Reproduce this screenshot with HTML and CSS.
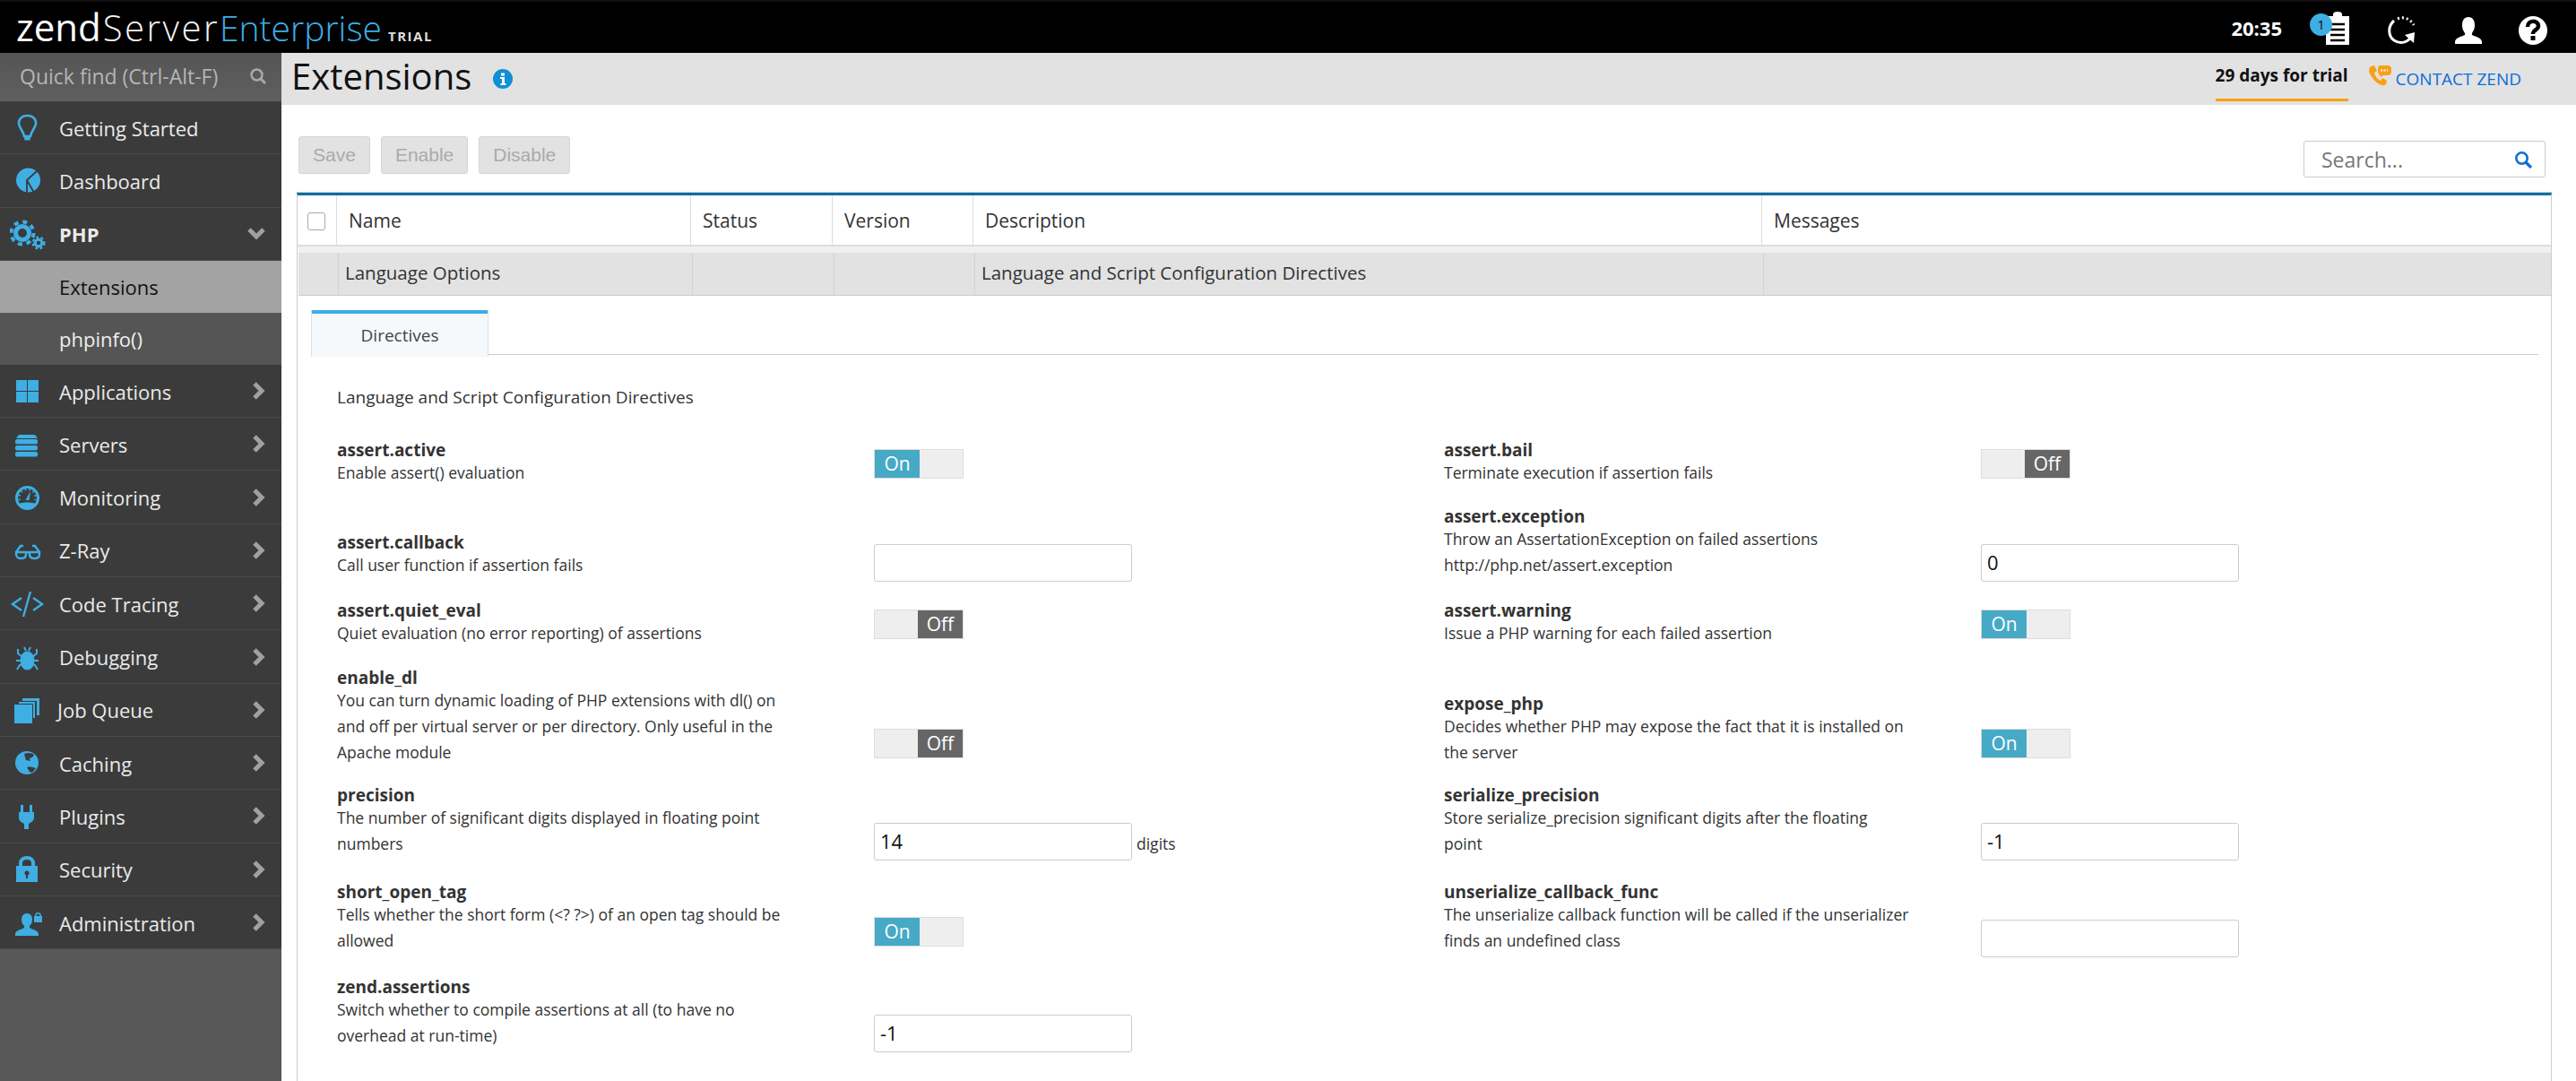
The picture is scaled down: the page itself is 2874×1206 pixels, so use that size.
FILE: index.html
```html
<!DOCTYPE html>
<html lang="en">
<head>
<meta charset="utf-8">
<title>Extensions</title>
<link rel="stylesheet" href="styles.css">
</head>
<body>
<header class="topbar">
  <div class="logo"><span class="logo-zend">zend</span><span class="logo-server">Server</span><span class="logo-ent">Enterprise</span><span class="logo-trial">TRIAL</span></div>
  <div class="top-right">
    <span class="clock">20:35</span>
    <span class="top-icon clip">
      <svg width="28" height="37" viewBox="0 0 28 37"><path fill="#fff" d="M1 5h8V3a5 3 0 0 1 10 0v2h8v32H1z"/><path stroke="#000" stroke-width="2.5" d="M6 14h16M6 20h16M6 26h16M6 32h16"/></svg>
      <span class="badge">1</span>
    </span>
    <svg class="top-icon refresh" width="32" height="32" viewBox="0 0 32 32" fill="none" stroke="#fff"><path stroke-width="3" d="M7 5C0 11 0 22 7 27c6 4 13 3 18-2"/><path fill="#fff" stroke="none" d="M19 21l11-3-1 12z"/><path stroke-width="3" stroke-dasharray="2 3" d="M11 3c7-3 14 0 18 7"/></svg>
    <svg class="top-icon user" width="30" height="30" viewBox="0 0 30 30"><path fill="#fff" d="M15 0c5 0 7 4 7 9s-2 7-3 9v2c4 2 11 3 11 8v2H0v-2c0-5 7-6 11-8v-2c-1-2-3-4-3-9s2-9 7-9z"/></svg>
    <svg class="top-icon help" width="32" height="32" viewBox="0 0 32 32"><circle cx="16" cy="16" r="16" fill="#fff"/><path fill="none" stroke="#000" stroke-width="4.5" d="M10 12c0-8 12-8 12-1 0 4-6 5-6 8v1"/><rect x="13.5" y="22" width="5" height="5" fill="#000"/></svg>
  </div>
</header>
<div class="layout">
  <nav class="sidebar">
    <div class="quickfind"><span>Quick find (Ctrl-Alt-F)</span>
      <svg width="20" height="20" viewBox="0 0 20 20" fill="none" stroke="#a9a9a9" stroke-width="2.5"><circle cx="8.5" cy="8.5" r="6"/><path stroke-width="3" d="M13 13l5 5"/></svg>
    </div>
    <a class="nav-item"><span class="nav-ic"><svg width="40" height="40" viewBox="0 0 40 40" fill="none" stroke="#3eaee3"><path stroke-width="2.6" d="M19.5 7C13 7 9.5 11.500 10 16c.5 5 5 8 6 14h7c1-6 5.500-9 6-14 .5-4.500-3-9-9.500-9z"/><path fill="#3eaee3" stroke="none" d="M15.500 29h8l-1 5.500h-6z"/></svg></span><span class="nav-label">Getting Started</span></a>
    <a class="nav-item"><span class="nav-ic"><svg width="40" height="40" viewBox="0 0 40 40"><circle cx="20.500" cy="20" r="13.500" fill="#3eaee3"/><path fill="none" stroke="#3b3b3b" stroke-width="1.800" d="M31 9L19 20l8 14M19 20v14"/></svg></span><span class="nav-label">Dashboard</span></a>
    <a class="nav-item open"><span class="nav-ic"><svg width="40" height="40" viewBox="0 0 40 40" fill="none" stroke="#3eaee3"><circle cx="14" cy="19" r="7.500" stroke-width="5"/><circle cx="14" cy="19" r="12.500" stroke-width="4" stroke-dasharray="5 4.800"/><circle cx="32" cy="30" r="3.800" stroke-width="3"/><circle cx="32" cy="30" r="6.300" stroke-width="2.400" stroke-dasharray="2.800 2.450"/></svg></span><span class="nav-label">PHP</span>
      <svg class="chev" width="20" height="14" viewBox="0 0 20 14" fill="none" stroke="#a0a0a0" stroke-width="5"><path d="M2 2l8 8 8-8"/></svg></a>
    <a class="sub-item active">Extensions</a>
    <a class="sub-item">phpinfo()</a>
    <a class="nav-item"><span class="nav-ic"><svg width="40" height="40" viewBox="0 0 40 40" fill="#3eaee3"><rect x="7" y="8" width="12" height="12"/><rect x="20" y="8" width="12" height="12"/><rect x="7" y="21" width="12" height="12"/><rect x="20" y="21" width="12" height="12"/></svg></span><span class="nav-label">Applications</span><svg class="chev" width="14" height="20" viewBox="0 0 14 20" fill="none" stroke="#a0a0a0" stroke-width="5"><path d="M2 2l8 8-8 8"/></svg></a>
    <a class="nav-item"><span class="nav-ic"><svg width="40" height="40" viewBox="0 0 40 40" fill="#3eaee3"><path d="M10 10h18l3 4H7z"/><rect x="6" y="15" width="25" height="5.500" rx="2"/><rect x="6" y="22" width="25" height="5.500" rx="2"/><rect x="6" y="29" width="25" height="5.500" rx="2"/></svg></span><span class="nav-label">Servers</span><svg class="chev" width="14" height="20" viewBox="0 0 14 20" fill="none" stroke="#a0a0a0" stroke-width="5"><path d="M2 2l8 8-8 8"/></svg></a>
    <a class="nav-item"><span class="nav-ic"><svg width="40" height="40" viewBox="0 0 40 40" fill="none" stroke="#3eaee3"><circle cx="19.500" cy="20.500" r="12" stroke-width="3"/><path stroke-width="2" stroke-dasharray="1.500 3.200" d="M11 23a9 9 0 1 1 17 0"/><path fill="#3eaee3" stroke="none" d="M23 13l-1.500 10h-4zM10 27c6-2 13-2 19 0l-4 4H14z"/></svg></span><span class="nav-label">Monitoring</span><svg class="chev" width="14" height="20" viewBox="0 0 14 20" fill="none" stroke="#a0a0a0" stroke-width="5"><path d="M2 2l8 8-8 8"/></svg></a>
    <a class="nav-item"><span class="nav-ic"><svg width="40" height="40" viewBox="0 0 40 40" fill="none" stroke="#3eaee3" stroke-width="2.400"><path d="M7 22h11v2c0 3-2 5-5 5h-1c-3 0-5-2-5-5zM22 22h11v2c0 3-2 5-5 5h-1c-3 0-5-2-5-5zM18 23c1-1 3-1 4 0M7 22l5-7h3M33 22l-5-7h-3"/></svg></span><span class="nav-label">Z-Ray</span><svg class="chev" width="14" height="20" viewBox="0 0 14 20" fill="none" stroke="#a0a0a0" stroke-width="5"><path d="M2 2l8 8-8 8"/></svg></a>
    <a class="nav-item"><span class="nav-ic"><svg width="40" height="40" viewBox="0 0 40 40" fill="none" stroke="#3eaee3" stroke-width="2.400"><path d="M13 14L3 21l10 7M26 14l10 7-10 7M23 7l-8 28"/></svg></span><span class="nav-label">Code Tracing</span><svg class="chev" width="14" height="20" viewBox="0 0 14 20" fill="none" stroke="#a0a0a0" stroke-width="5"><path d="M2 2l8 8-8 8"/></svg></a>
    <a class="nav-item"><span class="nav-ic"><svg width="40" height="40" viewBox="0 0 40 40" fill="#3eaee3" stroke="#3eaee3"><ellipse cx="19.500" cy="24" rx="8" ry="10.500" stroke="none"/><path fill="none" stroke-width="2" d="M9 11v5l5 4M30 11v5l-5 4M7 24h6M32 24h-6M8 34l3-5 4-1M31 34l-3-5-4-1M16 9l2 4M23 9l-2 4"/></svg></span><span class="nav-label">Debugging</span><svg class="chev" width="14" height="20" viewBox="0 0 14 20" fill="none" stroke="#a0a0a0" stroke-width="5"><path d="M2 2l8 8-8 8"/></svg></a>
    <a class="nav-item"><span class="nav-ic"><svg width="40" height="40" viewBox="0 0 40 40" fill="#3eaee3"><rect x="5" y="14" width="20" height="21"/><path d="M10 11h18v18h-2V13H10zM14 7h19v19h-3V10H14z"/></svg></span><span class="nav-label job">Job Queue</span><svg class="chev" width="14" height="20" viewBox="0 0 14 20" fill="none" stroke="#a0a0a0" stroke-width="5"><path d="M2 2l8 8-8 8"/></svg></a>
    <a class="nav-item"><span class="nav-ic"><svg width="40" height="40" viewBox="0 0 40 40"><circle cx="19" cy="20" r="13" fill="#3eaee3"/><path fill="#3b3b3b" d="M16 10c4-2 9-1 11 1l-2 3-3 1 1 3-5-1-1-3zM19 25c3-1 7 0 10 1l-4 5-3-1z"/></svg></span><span class="nav-label">Caching</span><svg class="chev" width="14" height="20" viewBox="0 0 14 20" fill="none" stroke="#a0a0a0" stroke-width="5"><path d="M2 2l8 8-8 8"/></svg></a>
    <a class="nav-item"><span class="nav-ic"><svg width="40" height="40" viewBox="0 0 40 40" fill="#3eaee3"><rect x="12" y="8" width="3" height="10"/><rect x="22" y="8" width="3" height="10"/><path d="M10 16h17v6c0 4-4 6-6 7v6h-5v-6c-2-1-6-3-6-7z"/></svg></span><span class="nav-label">Plugins</span><svg class="chev" width="14" height="20" viewBox="0 0 14 20" fill="none" stroke="#a0a0a0" stroke-width="5"><path d="M2 2l8 8-8 8"/></svg></a>
    <a class="nav-item"><span class="nav-ic"><svg width="40" height="40" viewBox="0 0 40 40"><path fill="none" stroke="#3eaee3" stroke-width="4" d="M12 17v-4c0-4 3-6 7-6s7 2 7 6v4"/><rect x="7" y="16" width="24" height="18" fill="#3eaee3"/><circle cx="19" cy="24" r="2.500" fill="#3b3b3b"/><rect x="18" y="24" width="2" height="6" fill="#3b3b3b"/></svg></span><span class="nav-label">Security</span><svg class="chev" width="14" height="20" viewBox="0 0 14 20" fill="none" stroke="#a0a0a0" stroke-width="5"><path d="M2 2l8 8-8 8"/></svg></a>
    <a class="nav-item"><span class="nav-ic"><svg width="40" height="40" viewBox="0 0 40 40" fill="#3eaee3"><path d="M19 10c4 0 6 3 6 7s-2 6-3 7v2c3 2 10 3 10 7v2H6v-2c0-4 7-5 10-7v-2c-1-1-3-3-3-7s2-7 6-7z"/><rect x="27" y="13" width="9" height="7"/><path fill="none" stroke="#3eaee3" stroke-width="1.600" d="M29 14v-2c0-3 5-3 5 0v2"/></svg></span><span class="nav-label">Administration</span><svg class="chev" width="14" height="20" viewBox="0 0 14 20" fill="none" stroke="#a0a0a0" stroke-width="5"><path d="M2 2l8 8-8 8"/></svg></a>
  </nav>
  <main class="main">
    <div class="page-head">
      <h1>Extensions</h1>
      <svg class="info" width="22" height="22" viewBox="0 0 22 22"><circle cx="11" cy="11" r="11" fill="#0f8fd6"/><path fill="#fff" d="M9 4.500h4v3H9zM8 9h5v7h1.500v2h-6v-2H10v-5H8z"/></svg>
      <div class="head-right">
        <span class="trial">29 days for trial</span>
        <a class="contact"><svg width="26" height="26" viewBox="0 0 26 26"><path fill="#f7a11a" d="M3 2l4-1 3 6-3 2c1 4 3 7 7 9l2-3 5 3-1 4c-1 1-3 2-5 1C9 21 3 14 1 8 1 5 2 3 3 2z"/><path fill="#f7a11a" d="M14 1h8c2 0 4 1 4 4v3c0 3-2 4-4 4h-5l-4 3 1-3c-2 0-3-2-3-4V5c0-3 1-4 3-4z"/><path stroke="#fff" stroke-width="2" stroke-dasharray="2 1.500" d="M14 6.500h8"/></svg><span>CONTACT ZEND</span></a>
      </div>
    </div>
    <div class="toolbar">
      <div class="buttons"><button class="btn">Save</button><button class="btn">Enable</button><button class="btn">Disable</button></div>
      <div class="search"><span>Search...</span><svg width="20" height="20" viewBox="0 0 20 20" fill="none" stroke="#0a6fd6" stroke-width="2.600"><circle cx="8.500" cy="8.500" r="6.200"/><path stroke-width="3.200" d="M13 13l6 6"/></svg></div>
    </div>
    <section class="panel">
      <div class="thead">
        <div class="th th-check"><span class="checkbox"></span></div>
        <div class="th">Name</div><div class="th">Status</div><div class="th">Version</div><div class="th">Description</div><div class="th">Messages</div>
      </div>
      <div class="trow">
        <div class="td"></div><div class="td td-name">Language Options</div><div class="td"></div><div class="td"></div><div class="td td-desc">Language and Script Configuration Directives</div><div class="td"></div>
      </div>
      <div class="tabs"><div class="tab">Directives</div></div>
      <p class="intro">Language and Script Configuration Directives</p>
      <div class="form">
        <div class="cell"><div class="text"><b>assert.active</b><p>Enable assert() evaluation</p></div><div class="toggle on"><span>On</span></div></div>
        <div class="cell"><div class="text"><b>assert.bail</b><p>Terminate execution if assertion fails</p></div><div class="toggle off"><span>Off</span></div></div>
        <div class="cell"><div class="text"><b>assert.callback</b><p>Call user function if assertion fails</p></div><div class="input"></div></div>
        <div class="cell"><div class="text"><b>assert.exception</b><p>Throw an AssertationException on failed assertions<br>http://php.net/assert.exception</p></div><div class="input">0</div></div>
        <div class="cell"><div class="text"><b>assert.quiet_eval</b><p>Quiet evaluation (no error reporting) of assertions</p></div><div class="toggle off"><span>Off</span></div></div>
        <div class="cell"><div class="text"><b>assert.warning</b><p>Issue a PHP warning for each failed assertion</p></div><div class="toggle on"><span>On</span></div></div>
        <div class="cell"><div class="text"><b>enable_dl</b><p>You can turn dynamic loading of PHP extensions with dl() on<br>and off per virtual server or per directory. Only useful in the<br>Apache module</p></div><div class="toggle off"><span>Off</span></div></div>
        <div class="cell"><div class="text"><b>expose_php</b><p>Decides whether PHP may expose the fact that it is installed on<br>the server</p></div><div class="toggle on"><span>On</span></div></div>
        <div class="cell"><div class="text"><b>precision</b><p>The number of significant digits displayed in floating point<br>numbers</p></div><div class="input">14</div><span class="unit">digits</span></div>
        <div class="cell"><div class="text"><b>serialize_precision</b><p>Store serialize_precision significant digits after the floating<br>point</p></div><div class="input">-1</div></div>
        <div class="cell"><div class="text"><b>short_open_tag</b><p>Tells whether the short form (&lt;? ?&gt;) of an open tag should be<br>allowed</p></div><div class="toggle on"><span>On</span></div></div>
        <div class="cell"><div class="text"><b>unserialize_callback_func</b><p>The unserialize callback function will be called if the unserializer<br>finds an undefined class</p></div><div class="input"></div></div>
        <div class="cell"><div class="text"><b>zend.assertions</b><p>Switch whether to compile assertions at all (to have no<br>overhead at run-time)</p></div><div class="input">-1</div></div>
      </div>
    </section>
  </main>
</div>
</body>
</html>
```
FILE: styles.css
```css
* { box-sizing: border-box; }
html, body { margin: 0; height: 100%; overflow: hidden; }
body { font-family: "Open Sans", sans-serif; color: #333; background: #fff; width: 2874px; height: 1206px; }

.topbar { height: 59px; background: #000; border-top: 2px solid #111; display: flex; align-items: center; justify-content: space-between; }
.logo { display: flex; align-items: baseline; padding-left: 18px; line-height: 1; margin-top: -2px; }
.logo-zend { color: #fff; font-size: 42px; font-weight: 400; margin-right: 2px; }
.logo-server { color: #f2f2f2; font-size: 40px; font-weight: 300; letter-spacing: 2.5px; }
.logo-ent { color: #3eaee3; font-size: 39px; font-weight: 300; }
.logo-trial { color: #ddd; font-size: 15px; font-weight: 700; letter-spacing: 1.5px; margin-left: 7px; }
.top-right { display: flex; align-items: center; padding-right: 32px; }
.clock { color: #fff; font-weight: 700; font-size: 22px; margin-right: 48px; }
.clip { position: relative; display: block; height: 37px; width: 28px; margin-right: 42px; margin-top: 2px; }
.clip svg { display: block; }
.badge { position: absolute; left: -17px; top: 2px; width: 25px; height: 25px; border-radius: 50%; background: #3eaee3; color: #111; font-size: 15px; text-align: center; line-height: 25px; }
.refresh { margin-right: 43px; margin-top: 6px; }
.user { margin-right: 41px; margin-top: 6px; }
.help { margin-top: 6px; }

.layout { display: flex; height: 1147px; }
.sidebar { width: 314px; flex: none; background: #575757; }
.quickfind { height: 54px; background: linear-gradient(#555, #5f5f5f); color: #b5b5b5; display: flex; align-items: center; justify-content: space-between; padding: 0 16px 2px 22px; font-size: 23px; }
.nav-item { height: 59.3px; display: flex; align-items: center; background: #3b3b3b; border-bottom: 1px solid #4a4a4a; color: #eaeaea; font-size: 22px; padding-left: 11px; padding-right: 18px; }
.nav-ic { width: 55px; flex: none; display: flex; }
.nav-ic svg { display: block; }
.nav-label { flex: 1; padding-top: 1px; }
.nav-label.job { margin-left: -2px; }
.open .nav-label { font-weight: 700; }
.sub-item { height: 58px; display: flex; align-items: center; padding-left: 66px; font-size: 22px; color: #eee; background: #555; }
.sub-item.active { background: #a3a3a3; color: #111; }

.main { flex: 1; min-width: 0; display: flex; flex-direction: column; }
.page-head { height: 58px; background: #e2e2e2; display: flex; align-items: center; padding-left: 11px; flex: none; }
h1 { font-size: 40px; font-weight: 400; margin: 0 0 6px; color: #111; line-height: 1; }
.info { margin-left: 24px; }
.head-right { margin-left: auto; display: flex; height: 100%; padding-right: 61px; }
.trial { font-weight: 700; color: #111; font-size: 19px; height: 54px; border-bottom: 3px solid #f9a100; display: flex; align-items: center; padding-bottom: 2px; }
.contact { display: flex; align-items: center; color: #0a6fd6; font-size: 19px; margin-left: 22px; height: 58px; }
.contact svg { margin-top: -6px; margin-right: 5px; width: 26px; }

.toolbar { flex: none; height: 98px; padding: 35px 34px 0 19px; display: flex; justify-content: space-between; align-items: flex-start; }
.buttons { display: flex; gap: 12px; }
.btn { height: 42px; background: #e2e2e2; border: 1px solid #d5d5d5; border-radius: 3px; color: #aaa; font-family: "Liberation Sans", sans-serif; font-size: 21px; padding: 0 15px; }
.search { width: 270px; height: 41px; margin-top: 5px; border: 1px solid #ccc; border-radius: 3px; display: flex; align-items: center; justify-content: space-between; padding: 0 14px 0 19px; color: #777; font-size: 23px; }

.panel { margin-left: 17px; margin-right: 27px; flex: 1; border: 1px solid #ccc; border-width: 0 1px; border-top: 3px solid #0a6fa3; box-shadow: 0 -1px 0 #ccc; }
.thead { display: grid; grid-template-columns: 43px 395px 158px 157px 880px 1fr; height: 57px; border-bottom: 2px solid #ddd; }
.th { border-left: 1px solid #ddd; display: flex; align-items: center; padding-left: 13px; font-size: 21px; color: #333; }
.th-check { border-left: 0; padding-left: 11px; }
.checkbox { width: 20px; height: 20px; border: 1px solid #aaa; border-radius: 3px; display: block; margin-top: 3px; }
.trow { display: grid; grid-template-columns: 44px 395px 158px 157px 880px 1fr; margin-left: 1px; height: 55px; border-top: 7px solid #f0f0f0; background: #e2e2e2; border-bottom: 1px solid #ccc; }
.td { border-left: 1px solid #d2d2d2; font-size: 20.500px; color: #333; display: flex; align-items: center; padding: 0 0 3px 7px; }
.td:first-child { border-left: 0; }
.tabs { margin: 16px 14px 0 15px; height: 50px; border-bottom: 1px solid #ccc; }
.tab { width: 198px; height: 52px; background: #f5f9fc; border: 1px solid #dce3e8; border-top: 4px solid #3eaee3; border-bottom: 0; border-radius: 2px 2px 0 0; display: flex; align-items: center; justify-content: center; font-size: 19px; color: #444; }
.intro { margin: 33px 0 0 44px; font-size: 19px; line-height: 29px; color: #333; }
.form { margin: 34px 0 0 44px; display: grid; grid-template-columns: 1235px 1235px; grid-template-rows: 54px 103px 76px 133px 102px 108px 106px; }
.cell { display: flex; align-items: flex-end; }
.text { width: 599px; flex: none; padding-bottom: 4px; }
.text b { display: block; font-size: 19px; line-height: 21px; color: #333; }
.text p { margin: 0; white-space: nowrap; font-size: 17.500px; line-height: 29px; color: #333; }
.toggle { width: 100px; height: 33px; margin-bottom: 12px; border: 1px solid #ddd; background: #eee; display: flex; font-size: 21px; color: #fff; line-height: 30px; }
.toggle span { width: 50px; text-align: center; }
.toggle.on span { background: #46a9c6; }
.toggle.off span { background: #666; margin-left: auto; }
.input { width: 288px; height: 42px; border: 1px solid #ccc; border-radius: 3px; font-size: 22px; color: #111; padding-left: 6px; line-height: 39px; }
.unit { font-size: 17.500px; margin-left: 5px; line-height: 29px; padding-bottom: 4px; }
```
